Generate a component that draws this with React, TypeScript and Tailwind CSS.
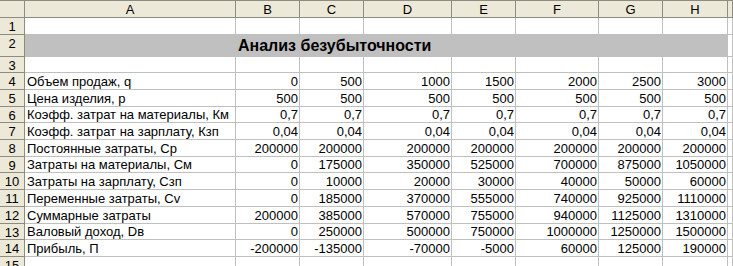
import React from "react";

const cols = ["A", "B", "C", "D", "E", "F", "G", "H", ""];

const rows: [string, string[]][] = [
  ["Объем продаж, q", ["0", "500", "1000", "1500", "2000", "2500", "3000"]],
  ["Цена изделия, p", ["500", "500", "500", "500", "500", "500", "500"]],
  ["Коэфф. затрат на материалы, Км", ["0,7", "0,7", "0,7", "0,7", "0,7", "0,7", "0,7"]],
  ["Коэфф. затрат на зарплату, Кзп", ["0,04", "0,04", "0,04", "0,04", "0,04", "0,04", "0,04"]],
  ["Постоянные затраты, Ср", ["200000", "200000", "200000", "200000", "200000", "200000", "200000"]],
  ["Затраты на материалы, См", ["0", "175000", "350000", "525000", "700000", "875000", "1050000"]],
  ["Затраты на зарплату, Сзп", ["0", "10000", "20000", "30000", "40000", "50000", "60000"]],
  ["Переменные затраты, Cv", ["0", "185000", "370000", "555000", "740000", "925000", "1110000"]],
  ["Суммарные затраты", ["200000", "385000", "570000", "755000", "940000", "1125000", "1310000"]],
  ["Валовый доход, Dв", ["0", "250000", "500000", "750000", "1000000", "1250000", "1500000"]],
  ["Прибыль, П", ["-200000", "-135000", "-70000", "-5000", "60000", "125000", "190000"]],
];

const dataHeights = [17, 17, 16, 17, 17, 16, 17, 17, 17, 16, 17];

const gridCols = "grid grid-cols-[25px_211px_64px_64px_88px_64px_83px_64px_65px_1fr]";

function RowHead({ n, h }: { n: string; h: number }) {
  return (
    <div
      className="bg-[#ECE9D8] border-r border-b border-[#8E8C80] flex items-start pt-[2px] justify-center text-[13px] text-black leading-none"
      style={{ height: h }}
    >
      {n}
    </div>
  );
}

function Cell({ children, right, h }: { children?: React.ReactNode; right?: boolean; h: number }) {
  return (
    <div
      className={
        "border-r border-b border-[#C0C0C0] bg-white flex items-center whitespace-nowrap overflow-hidden text-[13px] text-black leading-none " +
        (right ? "justify-end pr-[1px]" : "pl-[2px]")
      }
      style={{ height: h }}
    >
      {children}
    </div>
  );
}

export default function App() {
  return (
    <div
      className="w-[733px] h-[266px] overflow-hidden bg-white"
      style={{ fontFamily: '"Liberation Sans", Arial, sans-serif' }}
    >
      {/* header */}
      <div className={gridCols + " h-[18px] border-t border-[#8E8C80] bg-[#ECE9D8]"}>
        <div className="border-r border-b border-[#8E8C80]" />
        {cols.map((c, i) => (
          <div
            key={i}
            className="border-r border-b border-[#8E8C80] flex items-center justify-center text-[13px] text-black leading-none"
          >
            {c}
          </div>
        ))}
      </div>
      {/* row 1 */}
      <div className={gridCols}>
        <RowHead n="1" h={17} />
        {cols.map((c, i) => (
          <Cell key={i} h={17} />
        ))}
      </div>
      {/* row 2 */}
      <div className={gridCols}>
        <RowHead n="2" h={22} />
        <div className="col-span-8 h-[22px] bg-[#C0C0C0] border-b border-[#C0C0C0] flex items-center">
          <div className="w-[211px]" />
          <div className="pl-[2px] font-bold text-[16px] leading-none text-black whitespace-nowrap">
            Анализ безубыточности
          </div>
        </div>
        <Cell h={22} />
      </div>
      {/* row 3 */}
      <div className={gridCols}>
        <RowHead n="3" h={16} />
        {cols.map((c, i) => (
          <Cell key={i} h={16} />
        ))}
      </div>
      {rows.map(([label, vals], i) => (
        <div key={i} className={gridCols}>
          <RowHead n={String(i + 4)} h={dataHeights[i]} />
          <Cell h={dataHeights[i]}>{label}</Cell>
          {vals.map((v, j) => (
            <Cell key={j} right h={dataHeights[i]}>
              {v}
            </Cell>
          ))}
          <Cell h={dataHeights[i]} />
        </div>
      ))}
      <div className={gridCols}>
        <RowHead n="15" h={17} />
        {cols.map((c, i) => (
          <Cell key={i} h={17} />
        ))}
      </div>
    </div>
  );
}
